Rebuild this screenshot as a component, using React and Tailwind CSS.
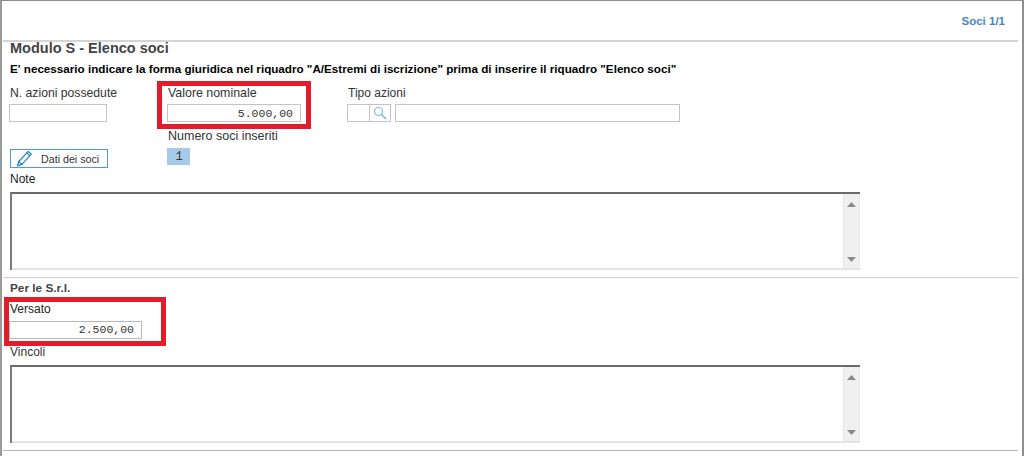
import React from "react";

function NoteBox() {
  return (
    <div className="flex h-[78px] w-[850px] border-t-2 border-l-2 border-t-[#6b6b6b] border-l-[#7a7a7a] bg-white">
      <div className="flex-1 border-b-2 border-b-[#e4e4e4]" />
      <div className="flex w-[17px] flex-col items-center justify-between bg-[#f0f0f0] border-l border-l-[#e6e6e6] border-r border-r-[#e8e8e8] border-b-2 border-b-[#e4e4e4] pt-[8px] pb-[6px]">
        <svg width="9" height="5" viewBox="0 0 9 5"><path d="M4.5 0 L9 5 H0 Z" fill="#8a8a8a" /></svg>
        <svg width="9" height="5" viewBox="0 0 9 5"><path d="M0 0 H9 L4.5 5 Z" fill="#8a8a8a" /></svg>
      </div>
    </div>
  );
}

function Pencil() {
  return (
    <svg width="17" height="17" viewBox="0 0 18 18" fill="none" stroke="#2f86c5" strokeWidth="1.4" strokeLinejoin="round" strokeLinecap="round">
      <path d="M13 1.5 L16.2 4.4 L6.2 15.2 L1.6 16.8 L2.9 12.2 Z" />
      <path d="M11.4 3.3 L14.6 6.2" />
      <path d="M2.9 12.2 L6.2 15.2" />
    </svg>
  );
}

export default function App() {
  return (
    <div className="h-[456px] w-[1024px] overflow-hidden bg-white text-[12px] leading-[14px] text-[#333] border-t border-t-[#8c8c8c] border-l-2 border-l-[#9a9a9a] border-r-2 border-r-[#8f8f8f] font-['Liberation_Sans',Arial,sans-serif]">
      <div className="flex h-[39px] items-center justify-end pr-[17px] pt-[1px]">
        <span className="font-bold text-[#4a86c0] text-[11.5px]">Soci 1/1</span>
      </div>

      <div className="ml-[1px] w-[1015px] border-t-2 border-t-[#d4d4d4]">
        <div className="pl-[7px]">
          <div className="-mt-[1px] h-[14px] text-[14.5px] leading-[14px] font-bold text-[#444]">Modulo S - Elenco soci</div>
          <div className="mt-[7px] h-[14px] text-[11.67px] font-bold text-black">E' necessario indicare la forma giuridica nel riquadro "A/Estremi di iscrizione" prima di inserire il riquadro "Elenco soci"</div>

          <div className="flex">
            <div className="flex w-[147px] flex-col">
              <div className="mt-[10px] h-[14px] text-[12.2px]">N. azioni possedute</div>
              <div className="ml-[-1px] mt-[4px] h-[18px] w-[98px] border border-[#c4c4c4] bg-white" />
              <button className="mt-[27px] flex h-[19px] w-[98px] items-center border border-[#4f9bd0] pl-[5px] text-[10.7px] text-[#333]">
                <Pencil />
                <span className="ml-[8px]">Dati dei soci</span>
              </button>
            </div>

            <div className="flex w-[190px] flex-col">
              <div className="mt-[5px] flex h-[48px] w-[154px] flex-col border-[5px] border-[#e21c2a] pl-[5px]">
                <div className="h-[14px] pl-[1px] text-[12.4px]">Valore nominale</div>
                <div className="mt-[4px] flex h-[18px] w-[134px] items-center justify-end border border-[#c4c4c4] pr-[7px] pt-[1px] font-['Liberation_Mono',monospace] text-[11.5px]">5.000,00</div>
              </div>
              <div className="ml-[11px] h-[14px] text-[12.5px]">Numero soci inseriti</div>
              <div className="ml-[10px] mt-[5px] flex h-[17px] w-[23px] items-center justify-center pl-[1px] bg-[#a6cbe8] font-['Liberation_Mono',monospace] text-[12px] text-[#333]">1</div>
            </div>

            <div className="flex flex-col">
              <div className="mt-[10px] h-[14px] pl-[1px]">Tipo azioni</div>
              <div className="mt-[4px] flex h-[18px]">
                <div className="w-[23px] border border-[#c4c4c4]" />
                <div className="flex w-[21px] items-center justify-center border border-l-0 border-[#c4c4c4]">
                  <svg width="14" height="14" viewBox="0 0 14 14" fill="none" stroke="#7fb3de" strokeWidth="1.1"><circle cx="5.5" cy="5.5" r="4" /><path d="M8.5 8.5 L13 13" strokeWidth="1.5" /></svg>
                </div>
                <div className="ml-[4px] w-[285px] border border-[#c4c4c4]" />
              </div>
            </div>
          </div>

          <div className="mt-[4px] h-[14px] text-[#222]">Note</div>
          <div className="mt-[6px]"><NoteBox /></div>
        </div>

        <div className="mt-[7px] border-t border-t-[#cfcfcf]">
          <div className="h-[19px] pl-[7px] pt-[3px] text-[11.8px] font-bold text-[#444]">Per le S.r.l.</div>
          <div className="ml-[1px] flex h-[49px] w-[162px] flex-col border-[5px] border-[#e21c2a]">
            <div className="ml-[1px] h-[14px] text-[#222]">Versato</div>
            <div className="mt-[5px] flex h-[18px] w-[133px] items-center justify-end border border-[#b8b8b8] pr-[7px] font-['Liberation_Mono',monospace] text-[11.5px]">2.500,00</div>
          </div>
          <div className="ml-[7px] mt-[-1px] h-[14px]">Vincoli</div>
          <div className="ml-[7px] mt-[6px]"><NoteBox /></div>
          <div className="mt-[7px] border-t border-t-[#b4b4b4]" />
        </div>
      </div>
    </div>
  );
}
